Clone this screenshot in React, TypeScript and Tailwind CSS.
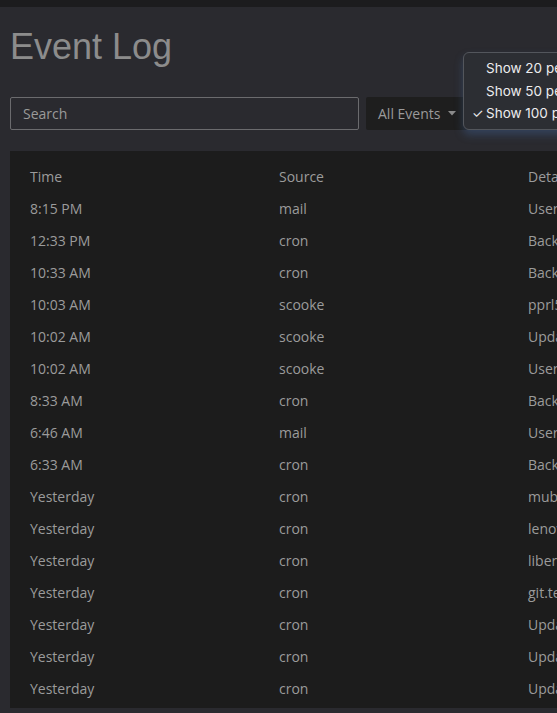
import React from "react";

const rows: [string, string, string][] = [
  ["8:15 PM", "mail", "User login from 10.0.0.4"],
  ["12:33 PM", "cron", "Backup completed"],
  ["10:33 AM", "cron", "Backup started"],
  ["10:03 AM", "scooke", "pprl5 deployed"],
  ["10:02 AM", "scooke", "Updated settings"],
  ["10:02 AM", "scooke", "User created"],
  ["8:33 AM", "cron", "Backup completed"],
  ["6:46 AM", "mail", "User login from 10.0.0.9"],
  ["6:33 AM", "cron", "Backup started"],
  ["Yesterday", "cron", "mubeng updated"],
  ["Yesterday", "cron", "lenovo firmware check"],
  ["Yesterday", "cron", "libertine sync"],
  ["Yesterday", "cron", "git.terminal pull"],
  ["Yesterday", "cron", "Updated packages"],
  ["Yesterday", "cron", "Updated packages"],
  ["Yesterday", "cron", "Updated packages"],
];

export default function App() {
  return (
    <div className="relative w-[557px] h-[713px] overflow-hidden bg-[#2a2a2f] font-['Open_Sans',sans-serif]">
      <div className="h-[7px] bg-[#1c1c1e]" />
      <div className="pl-[10px]">
        <h1 className="mt-[20px] h-[40px] leading-[40px] text-[36px] text-[#8c8c8c] font-['Liberation_Sans',Arial,sans-serif] whitespace-nowrap">
          Event Log
        </h1>
        <div className="mt-[30px] flex items-stretch gap-[7px] h-[33px]">
          <div className="w-[349px] h-[33px] rounded-[2px] border border-[#6b6b6e] flex items-center pl-[12px] text-[14px] text-[#9a9a9a]">
            Search
          </div>
          <div className="w-[140px] h-[33px] rounded-[2px] bg-[#1e1e1e] flex items-center pl-[12px] text-[14px] text-[#9a9a9a] whitespace-nowrap">
            All Events
            <svg className="ml-[8px]" width="8" height="5" viewBox="0 0 8 5">
              <path d="M0 0h8L4 4.5z" fill="#8a8a8a" />
            </svg>
          </div>
        </div>
        <div className="mt-[21px] w-[800px] h-[557px] bg-[#1c1c1c] pt-[9px] pl-[20px] text-[14px] text-[#9b9b9b]">
          {[["Time", "Source", "Details"] as [string, string, string], ...rows].map((r, i) => (
            <div key={i} className="grid grid-cols-[249px_249px_249px] h-[32px] items-center whitespace-nowrap">
              <div>{r[0]}</div>
              <div>{r[1]}</div>
              <div>{r[2]}</div>
            </div>
          ))}
        </div>
      </div>

      <div className="absolute left-[463px] top-[52px] w-[170px] h-[78px] rounded-[6px] border border-[#53565c] bg-[#2c2e33] shadow-[0_5px_8px_rgba(70,110,170,0.35)] pt-[4px] font-['Inter',sans-serif] text-[13.5px] text-[#ececee]">
        {["Show 20 per page", "Show 50 per page", "Show 100 per page"].map((t, i) => (
          <div key={i} className="relative h-[22.5px] flex items-center pl-[22px] whitespace-nowrap">
            {i === 2 && <span className="absolute left-[8px] text-[13px]">✓</span>}
            {t}
          </div>
        ))}
      </div>
    </div>
  );
}
